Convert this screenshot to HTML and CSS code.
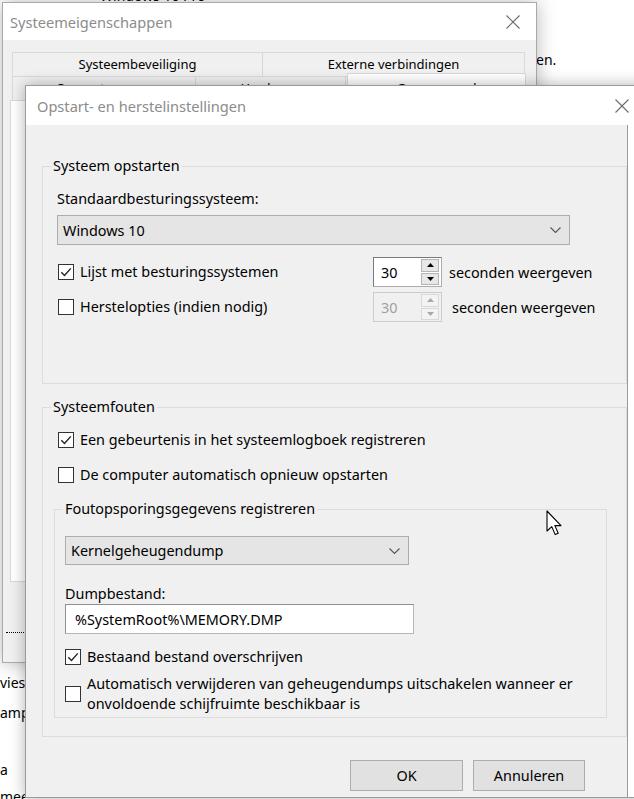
FILE: index.html
```html
<!DOCTYPE html>
<html lang="nl">
<head>
<meta charset="utf-8">
<title>Opstart- en herstelinstellingen</title>
<link rel="stylesheet" href="styles.css">
</head>
<body>
<div class="desk">
  <div class="desk-top">Windows 10 Pro</div>
  <div class="desk-en">en.</div>
  <div class="desk-left">
    <div class="dl">vies</div>
    <div class="dl">amp</div>
    <div class="dl gap">a</div>
    <div class="dl">mee</div>
  </div>

  <div class="win back">
    <div class="titlebar">
      <span class="title">Systeemeigenschappen</span>
      <span class="closebox"><svg width="14" height="14" viewBox="0 0 14 14"><path d="M0.5 0.5 L13.5 13.5 M13.5 0.5 L0.5 13.5" stroke="#6b6b6b" stroke-width="1.1" fill="none"/></svg></span>
    </div>
    <div class="back-body">
      <div class="tabs">
        <div class="tabrow">
          <div class="tab t1">Systeembeveiliging</div>
          <div class="tab t2">Externe verbindingen</div>
        </div>
        <div class="tabrow">
          <div class="tab t3">Computernaam</div>
          <div class="tab t4">Hardware</div>
          <div class="tab t5 sel">Geavanceerd</div>
        </div>
      </div>
      <div class="panel"></div>
      <div class="focusline"></div>
    </div>
  </div>

  <div class="win front">
    <div class="titlebar ftitle">
      <span class="title">Opstart- en herstelinstellingen</span>
      <span class="closebox"><svg width="14" height="14" viewBox="0 0 14 14"><path d="M0.5 0.5 L13.5 13.5 M13.5 0.5 L0.5 13.5" stroke="#6b6b6b" stroke-width="1.1" fill="none"/></svg></span>
    </div>
    <div class="front-main">
      <div class="front-body">
        <fieldset class="group g1">
          <legend>Systeem opstarten</legend>
          <div class="lbl">Standaardbesturingssysteem:</div>
          <div class="combo wide"><span>Windows 10</span><svg width="11" height="6" viewBox="0 0 11 6"><path d="M0.5 0.5 L5.5 5.5 L10.5 0.5" stroke="#555" stroke-width="1.1" fill="none"/></svg></div>
          <div class="optrow first">
            <label class="chk"><span class="cb"><svg width="14" height="14" viewBox="0 0 14 14"><path d="M2.3 7.3 L5.5 10.5 L11.8 3.4" stroke="#222" stroke-width="1.4" fill="none"/></svg></span>Lijst met besturingssystemen</label>
            <div class="spin">
              <span class="spin-val">30</span>
              <span class="spin-btns">
                <span class="sb"><svg width="7" height="4" viewBox="0 0 7 4"><path d="M0 4 L3.5 0 L7 4Z" fill="#000"/></svg></span>
                <span class="sb"><svg width="7" height="4" viewBox="0 0 7 4"><path d="M0 0 L3.5 4 L7 0Z" fill="#000"/></svg></span>
              </span>
            </div>
            <span class="sec">seconden weergeven</span>
          </div>
          <div class="optrow">
            <label class="chk"><span class="cb"></span>Herstelopties (indien nodig)</label>
            <div class="spin off">
              <span class="spin-val">30</span>
              <span class="spin-btns">
                <span class="sb"><svg width="7" height="4" viewBox="0 0 7 4"><path d="M0 4 L3.5 0 L7 4Z" fill="#a8a8a8"/></svg></span>
                <span class="sb"><svg width="7" height="4" viewBox="0 0 7 4"><path d="M0 0 L3.5 4 L7 0Z" fill="#a8a8a8"/></svg></span>
              </span>
            </div>
            <span class="sec sec2">seconden weergeven</span>
          </div>
        </fieldset>

        <fieldset class="group g2">
          <legend>Systeemfouten</legend>
          <label class="chk row1"><span class="cb"><svg width="14" height="14" viewBox="0 0 14 14"><path d="M2.3 7.3 L5.5 10.5 L11.8 3.4" stroke="#222" stroke-width="1.4" fill="none"/></svg></span>Een gebeurtenis in het systeemlogboek registreren</label>
          <label class="chk row2"><span class="cb"></span>De computer automatisch opnieuw opstarten</label>

          <fieldset class="group g3">
            <legend>Foutopsporingsgegevens registreren</legend>
            <div class="combo narrow"><span>Kernelgeheugendump</span><svg width="11" height="6" viewBox="0 0 11 6"><path d="M0.5 0.5 L5.5 5.5 L10.5 0.5" stroke="#555" stroke-width="1.1" fill="none"/></svg></div>
            <div class="lbl dump">Dumpbestand:</div>
            <div class="textbox">%SystemRoot%\MEMORY.DMP</div>
            <label class="chk row3"><span class="cb"><svg width="14" height="14" viewBox="0 0 14 14"><path d="M2.3 7.3 L5.5 10.5 L11.8 3.4" stroke="#222" stroke-width="1.4" fill="none"/></svg></span>Bestaand bestand overschrijven</label>
            <label class="chk row4"><span class="cb"></span><span class="multi">Automatisch verwijderen van geheugendumps uitschakelen wanneer er<br>onvoldoende schijfruimte beschikbaar is</span></label>
          </fieldset>
        </fieldset>

        <div class="buttons">
          <button class="btn ok">OK</button>
          <button class="btn">Annuleren</button>
        </div>
      </div>
    </div>
  </div>

  <svg class="cursor" width="17" height="27" viewBox="0 0 17 27"><path d="M1 1 L1 21 L5.8 16.6 L9.2 24.6 L12.2 23.3 L8.9 15.6 L15 15.6 Z" fill="#fff" stroke="#000" stroke-width="1.1" stroke-linejoin="round"/></svg>
</div>
</body>
</html>
```

FILE: styles.css
```css
* { box-sizing: border-box; }
html, body { margin: 0; padding: 0; }
body {
  width: 634px;
  height: 799px;
  overflow: hidden;
  background: #fff;
  font-family: "Noto Sans", "Segoe UI", sans-serif;
  font-size: 14.4px;
  color: #000;
}
.desk { position: relative; width: 634px; height: 799px; overflow: hidden; }

.desk-top { position: absolute; left: 100px; top: -14px; font-size: 14px; line-height: 20px; }
.desk-en { position: absolute; left: 536px; top: 50px; font-size: 14px; line-height: 20px; }
.desk-left { position: absolute; left: 0; top: 673px; font-size: 14px; }
.dl { line-height: 20px; height: 30px; }
.dl.gap { margin-top: 27px; height: 27px; }

/* windows */
.win { position: absolute; display: flex; flex-direction: column; }
.titlebar {
  background: #fff;
  display: flex;
  align-items: center;
  justify-content: space-between;
  flex: none;
}
.title { color: #8c8c8c; font-size: 14.6px; }
.closebox { width: 46px; display: flex; justify-content: center; align-items: center; }

.back {
  left: 2px; top: 2px;
  width: 535px; height: 661px;
  background: #f0f0f0;
  border: 1px solid #a9a9a9;
  box-shadow: 0 0 18px rgba(0,0,0,0.28);
  z-index: 1;
}
.back .titlebar { height: 37px; padding-left: 7px; }
.back-body { padding: 12px 7px 0 7px; display: flex; flex-direction: column; }
.tabs { margin-left: 2px; display: flex; flex-direction: column; position: relative; z-index: 1; }
.tabrow { display: flex; }
.tab {
  height: 25px;
  border: 1px solid #d9d9d9;
  margin-right: -1px;
  background: #f0f0f0;
  font-size: 13px;
  line-height: 23px;
  text-align: center;
  white-space: nowrap;
  overflow: hidden;
}
.t1 { width: 251px; }
.t2 { width: 263px; }
.t3 { width: 184px; height: 25px; margin-top: -1px; }
.t4 { width: 151px; height: 25px; margin-top: -1px; }
.t5 { width: 179px; }
.tab.sel { height: 28px; margin-top: -4px; margin-left: 2px; background: #fff; border-bottom: none; line-height: 28px; }
.panel {
  width: 517px;
  height: 482px;
  background: #fff;
  border: 1px solid #d9d9d9;
  margin-top: -1px;
}
.focusline { width: 24px; margin-top: 49px; border-bottom: 1px dotted #000; height: 2px; margin-left: -4px; }

/* front dialog */
.front {
  left: 25px; top: 85px;
  width: 625px; height: 713px;
  background: #fff;
  border: 1px solid #9a9a9a;
  box-shadow: 0 0 14px rgba(0,0,0,0.3);
  z-index: 2;
}
.ftitle { height: 39px; padding-left: 11px; width: 619px; }
.front-main { flex: 1; display: flex; }
.front-body {
  width: 602px;
  background: #f0f0f0;
  border-right: 1px solid #9a9a9a;
  padding: 31px 0 0 16px;
  display: flex;
  flex-direction: column;
}

.group {
  margin: 0;
  border: 1px solid #dcdcdc;
  min-width: 0;
  display: flex;
  flex-direction: column;
  align-items: flex-start;
}
.group legend { padding: 0 2px; line-height: 20px; }
.g1 { width: 585px; padding: 13px 14px 61px 14px; }
.g1 legend, .g2 legend { margin-left: -6px; }
.g2 { width: 585px; margin-top: 13px; padding: 13px 14px 18px 14px; }
.g3 { width: 553px; margin: 14px 0 0 -3px; padding: 17px 10px 3px 10px; }
.g3 legend { margin-left: -2px; }

.lbl { line-height: 20px; }
.combo {
  height: 30px;
  background: #e5e5e5;
  border: 1px solid #adadad;
  display: flex;
  align-items: center;
  justify-content: space-between;
  padding: 0 8px 0 5px;
}
.combo.wide { width: 513px; margin-top: 6px; }
.combo.narrow { width: 344px; height: 29px; }

.optrow {
  display: grid;
  grid-template-columns: 316px 69px auto;
  align-items: center;
  height: 30px;
  margin-top: 5px;
}
.optrow.first { margin-top: 12px; }

.chk { display: flex; align-items: center; gap: 6px; line-height: 20px; white-space: nowrap; }
.optrow .chk { margin-left: 1px; }
.cb {
  width: 16px; height: 16px;
  border: 1px solid #333;
  background: #fff;
  flex: none;
  display: flex;
  align-items: center;
  justify-content: center;
}
.row1 { margin-left: 1px; }
.row2 { margin-left: 1px; margin-top: 15px; }
.row3 { margin-top: 13px; }
.row4 { margin-top: 7px; }
.multi { white-space: nowrap; }

.spin {
  height: 30px;
  border: 1px solid #7a7a7a;
  border-right-color: #adadad;
  border-bottom-color: #adadad;
  background: #fff;
  display: flex;
  align-items: stretch;
}
.spin-val { flex: 1; padding-left: 7px; display: flex; align-items: center; }
.spin-btns { width: 21px; display: flex; flex-direction: column; padding: 1px 2px 1px 1px; gap: 1px; }
.sb {
  flex: 1;
  background: #e7e7e7;
  border: 1px solid #b5b5b5;
  display: flex;
  align-items: center;
  justify-content: center;
}
.spin.off { background: #f0f0f0; border-color: #cccccc; color: #a0a0a0; }
.spin.off .sb { background: #f3f3f3; border-color: #d9d9d9; }
.sec { margin-left: 7px; white-space: nowrap; }
.sec2 { margin-left: 10px; }

.dump { margin-top: 19px; }
.textbox {
  width: 349px;
  height: 30px;
  background: #fff;
  border: 1px solid #8f8f8f;
  border-right-color: #b5b5b5;
  border-bottom-color: #b5b5b5;
  padding-left: 9px;
  display: flex;
  align-items: center;
}

.buttons {
  display: flex;
  justify-content: flex-end;
  gap: 10px;
  padding-right: 42px;
  margin-top: 23px;
}
.btn {
  font-family: "Noto Sans", "Segoe UI", sans-serif;
  font-size: 14.4px;
  color: #000;
  height: 31px;
  width: 112px;
  background: #e1e1e1;
  border: 1px solid #adadad;
  padding: 0;
}
.btn.ok { width: 113px; }

.cursor { position: absolute; left: 546px; top: 510px; z-index: 3; }
```
